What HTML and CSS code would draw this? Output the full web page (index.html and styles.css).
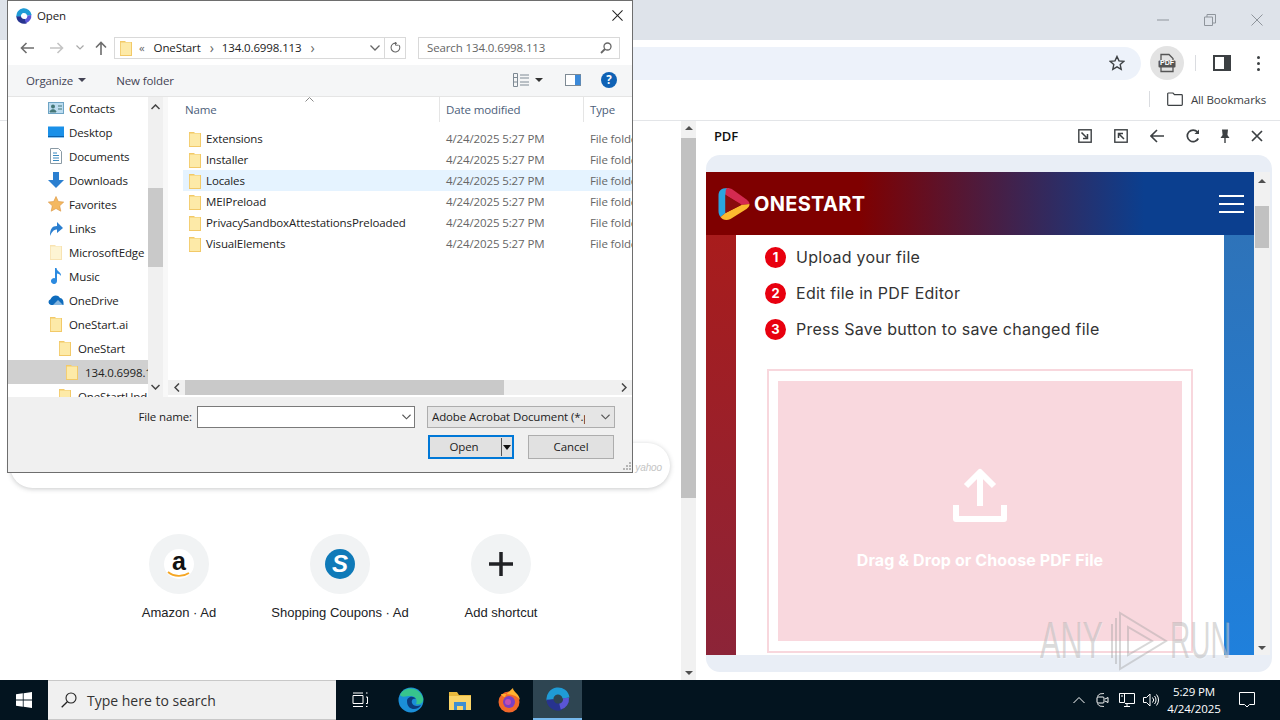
FILE: index.html
```html
<!DOCTYPE html>
<html>

<head>
  <title>OneStart - Open</title>
  <link rel="stylesheet" href="styles.css">
</head>

<body>
  <svg class="defs" width="0" height="0">
    <symbol id="folder" viewBox="0 0 16 16">
      <path d="M2 1h5l1 1h6v14H2z" fill="#f2c968" />
      <path d="M2.800 2.500h10.200v12.500H2.800z" fill="#fdeaa8" />
    </symbol>
    <symbol id="onestart" viewBox="0 0 24 24">
      <path d="M4 13A8 8 0 0 1 20 11" fill="none" stroke="#1f9bd6" stroke-width="7" />
      <path d="M4 12.500A8 8 0 0 0 15 19.500" fill="none" stroke="#27338f" stroke-width="7" />
      <path d="M14 19.700A8 8 0 0 0 20 11" fill="none" stroke="#5a55d6" stroke-width="6" />
    </symbol>
  </svg>

  <div class="browser">
    <div class="titlebar">
      <svg class="winctl" viewBox="0 0 12 12"><path d="M0 6h12" stroke="#8f959c" /></svg>
      <svg class="winctl" viewBox="0 0 12 12"><path d="M.5 3h8v8.500h-8zM3 3V.5h8.500V9H9" fill="none" stroke="#8f959c" /></svg>
      <svg class="winctl" viewBox="0 0 12 12"><path d="M.5.500l11 11M11.500.500l-11 11" stroke="#8f959c" /></svg>
    </div>

    <div class="toolbar">
      <div class="omnibox">
        <svg class="star" viewBox="0 0 16 16"><path d="M8 1.500l2 4.400 4.700.5-3.500 3.200 1 4.700L8 11.900l-4.200 2.400 1-4.700L1.300 6.400 6 5.900z" fill="none" stroke="#3c4043" stroke-width="1.400" /></svg>
      </div>
      <div class="pdf-btn">
        <svg viewBox="0 0 20 20" width="20" height="20">
          <path d="M4 1.500h8l4 4v13H4z" fill="none" stroke="#555" stroke-width="1.300" />
          <rect x="1.500" y="7.500" width="17" height="7" rx="1" fill="#555" />
        </svg>
        <span class="pdf-tag">PDF</span>
      </div>
      <div class="tool-sep"></div>
      <svg class="side-icon" viewBox="0 0 18 18"><rect x="1" y="2" width="16" height="14" fill="none" stroke="#3c4043" stroke-width="2" /><rect x="11" y="2" width="6" height="14" fill="#3c4043" /></svg>
      <div class="dots"><i></i><i></i><i></i></div>
    </div>

    <div class="bookmarks">
      <div class="bm-sep"></div>
      <svg class="bm-folder" viewBox="0 0 16 14"><path d="M.7 2V12.500a.8.8 0 0 0 .8.8h13a.8.8 0 0 0 .8-.8V3.500a.8.8 0 0 0-.8-.8H7.500L6 1H1.500a.8.8 0 0 0-.8 1z" fill="none" stroke="#3c4043" stroke-width="1.200" /></svg>
      <span class="bm-label">All Bookmarks</span>
    </div>

    <div class="content">
      <div class="ntp">
        <div class="ntp-main">
          <div class="ntp-search"><span class="yahoo">yahoo</span></div>
          <div class="shortcuts">
            <div class="shortcut">
              <div class="tile">
                <div class="amazon">a
                  <svg viewBox="0 0 24 7" class="smile"><path d="M1 1c6 5 15 5 21 1" fill="none" stroke="#f5a623" stroke-width="1.800" /></svg>
                </div>
              </div>
              <span>Amazon &middot; Ad</span>
            </div>
            <div class="shortcut">
              <div class="tile"><div class="coupon">S</div></div>
              <span>Shopping Coupons &middot; Ad</span>
            </div>
            <div class="shortcut">
              <div class="tile">
                <svg viewBox="0 0 26 26" width="26" height="26"><path d="M13 1v24M1 13h24" stroke="#202124" stroke-width="3.500" /></svg>
              </div>
              <span>Add shortcut</span>
            </div>
          </div>
        </div>
        <div class="vscroll">
          <span class="arrow up"></span>
          <div class="vthumb"></div>
          <span class="arrow down"></span>
        </div>
      </div>

      <div class="side">
        <div class="side-head">
          <span class="side-title">PDF</span>
          <div class="side-tools">
            <svg viewBox="0 0 14 14"><rect x=".8" y=".8" width="12.400" height="12.400" fill="none" stroke="#3c4043" stroke-width="1.400" /><path d="M3.500 3.500l5 5M9.500 5v4.500H5" fill="none" stroke="#3c4043" stroke-width="1.500" /></svg>
            <svg viewBox="0 0 14 14"><rect x=".8" y=".8" width="12.400" height="12.400" fill="none" stroke="#3c4043" stroke-width="1.400" /><path d="M10 10L5 5M4.500 9V4.500H9" fill="none" stroke="#3c4043" stroke-width="1.500" /></svg>
            <svg viewBox="0 0 14 14"><path d="M14 7H1.500M7 1L1 7l6 6" fill="none" stroke="#3c4043" stroke-width="1.600" /></svg>
            <svg viewBox="0 0 14 14"><path d="M12.300 9.500A5.800 5.800 0 1 1 11.500 3" fill="none" stroke="#3c4043" stroke-width="1.700" /><path d="M13 .5V5H8.500z" fill="#3c4043" /></svg>
            <svg class="tight" viewBox="0 0 14 14"><path d="M4 .5h6l-.6 5.500L11.500 9h-9l2.100-3zM6.300 9h1.400v5H6.300z" fill="#3c4043" /></svg>
            <svg class="tight" viewBox="0 0 14 14"><path d="M2 2l10 10M12 2L2 12" stroke="#3c4043" stroke-width="1.700" /></svg>
          </div>
        </div>
        <div class="side-frame">
          <div class="pdf-page">
            <div class="os-head">
              <svg class="os-logo" viewBox="0 0 32 34">
                <path d="M10 1C3 1 1 4 1 9v15c0 2 .5 4 2 6L8 26V8l2-7z" fill="#2aa5e0" />
                <path d="M10 1c2 0 3 .5 5 1.500l14 10c2 1.500 3 3 3 4.500l-8 1L8 8c0-3 0-7 2-7z" fill="#d42a50" />
                <path d="M3 30c2 3 6 4 10 2l16-10c2-1.500 3-3 3-5l-8 1-16 8z" fill="#fbb92f" />
                <path d="M8 8l16 9.500L8 26z" fill="#8a0d0d" />
              </svg>
              <span class="os-name">ONESTART</span>
              <div class="burger"><i></i><i></i><i></i></div>
            </div>
            <div class="os-body">
              <div class="strip-l"></div>
              <div class="os-main">
                <ol class="steps">
                  <li><b>1</b>Upload your file</li>
                  <li><b>2</b>Edit file in PDF Editor</li>
                  <li><b>3</b>Press Save button to save changed file</li>
                </ol>
                <div class="drop-outer">
                  <div class="drop-inner">
                    <svg viewBox="0 0 56 56" width="56" height="56"><path d="M28 39V6M14 19L28 5l14 14M4 38v14h48V38" fill="none" stroke="#fff" stroke-width="6" stroke-linejoin="round" /></svg>
                    <span class="drop-text">Drag &amp; Drop or Choose PDF File</span>
                  </div>
                </div>
              </div>
              <div class="strip-r"></div>
            </div>
          </div>
          <div class="pdf-scroll">
            <span class="arrow up dark"></span>
            <div class="pdf-thumb"></div>
            <span class="arrow down dark"></span>
          </div>
        </div>
      </div>
    </div>
  </div>

  <div class="taskbar">
    <div class="start">
      <svg viewBox="0 0 16 16" width="16" height="16"><path d="M0 2.300l6.800-1V7.600H0zM7.600 1.200L16 0v7.600H7.600zM0 8.400h6.800v6.300l-6.800-1zM7.600 8.400H16V16l-8.400-1.200z" fill="#fff" /></svg>
    </div>
    <div class="task-search">
      <svg viewBox="0 0 16 16" width="16" height="16"><circle cx="10" cy="6" r="5" fill="none" stroke="#222" stroke-width="1.100" /><path d="M6.300 9.700L.7 15.300" stroke="#222" stroke-width="1.300" /></svg>
      <span>Type here to search</span>
    </div>
    <div class="task-app">
      <svg viewBox="0 0 16 16" width="16" height="16"><path d="M1 3.500h10v8H1zM1 1h10M1 14.500h10M14 1h1.500M14 5h1.500v6.500H14M14 14.500h1.500" fill="none" stroke="#fff" /></svg>
    </div>
    <div class="task-app">
      <svg viewBox="0 0 26 26" width="26" height="26">
        <circle cx="13" cy="13" r="12.500" fill="#1b8fd8" />
        <path d="M2 8c4-9 19-9 23 3 1 5-3 7-7 6 2-4-1-8-5-8-5 0-9 2-11-1z" fill="#37c48d" />
        <path d="M9 14c0-4 6-6 9-2-2-1-5 0-4 4 1 3 5 4 9 2-3 6-14 6-14-4z" fill="#0c3b7c" />
      </svg>
    </div>
    <div class="task-app">
      <svg viewBox="0 0 24 22" width="24" height="22">
        <path d="M1 3h8l2 3h12v15H1z" fill="#e9b93c" />
        <path d="M1 7h22v14H1z" fill="#fbd568" />
        <path d="M6 13h12v8h-3v-4H9v4H6z" fill="#3f8fd0" />
      </svg>
    </div>
    <div class="task-app">
      <svg viewBox="0 0 26 26" width="26" height="26">
        <circle cx="13" cy="15" r="10.500" fill="#f2682a" />
        <path d="M5 7c1 2 2 3 4 3 1-3 4-5 8-9 0 4 6 5 7 12-4-6-14-6-19-6z" fill="#ffb02e" />
        <circle cx="13" cy="15" r="6" fill="#7a3fc4" />
        <circle cx="12" cy="15" r="3" fill="#c04fb5" />
      </svg>
    </div>
    <div class="task-app active">
      <svg width="24" height="24"><use href="#onestart" /></svg>
    </div>
    <div class="tray">
      <div class="tray-icon"><svg viewBox="0 0 12 8" width="12" height="8"><path d="M.5 7L6 1.500 11.500 7" fill="none" stroke="#fff" /></svg></div>
      <div class="tray-icon"><svg viewBox="0 0 14 16" width="14" height="16"><path d="M1 4.500a7 7 0 0 1 7-3M1 11.500a7 7 0 0 0 7 3" fill="none" stroke="#ddd" /><rect x="1" y="5" width="7" height="6" rx="1" fill="none" stroke="#fff" /><path d="M9 7l3-1.500v5L9 9" fill="none" stroke="#fff" /></svg></div>
      <div class="tray-icon"><svg viewBox="0 0 16 14" width="16" height="14"><path d="M.5 .5h15v10H6M5 13.500h6M8 10.500v3M.5 .5h5v9h-5zM2 3h2" fill="none" stroke="#fff" /></svg></div>
      <div class="tray-icon"><svg viewBox="0 0 16 14" width="16" height="14"><path d="M.5 4.500h3L7 1v12L3.500 9.500h-3zM9.500 4.500a3.500 3.500 0 0 1 0 5M11.500 3a6 6 0 0 1 0 8M13.500 1.500a8.500 8.500 0 0 1 0 11" fill="none" stroke="#fff" /></svg></div>
      <div class="clock"><span>5:29 PM</span><span>4/24/2025</span></div>
      <svg class="notif" viewBox="0 0 16 16" width="16" height="16"><path d="M.5 .5h15v12h-5L8 15l-2.500-2.500h-5z" fill="none" stroke="#fff" /></svg>
    </div>
  </div>

  <div class="watermark">
    <span class="wm-text">ANY</span>
    <svg viewBox="0 0 58 62" width="58" height="62"><path d="M2 14v34M6 8v46M10 3v56l46-28zM18 17v28l24-14z" fill="none" stroke="#a0a0a0" stroke-width="2" /></svg>
    <span class="wm-text wm-run">RUN</span>
  </div>

  <div class="dialog">
    <div class="dlg-title">
      <svg width="16" height="16"><use href="#onestart" /></svg>
      <span>Open</span>
      <svg class="dlg-close" viewBox="0 0 12 12"><path d="M.5.500l11 11M11.500.500l-11 11" stroke="#222" stroke-width="1.100" /></svg>
    </div>

    <div class="dlg-nav">
      <svg class="nav-btn" viewBox="0 0 14 12"><path d="M14 6H1.500M6.500 1l-5 5 5 5" fill="none" stroke="#6d6d6d" stroke-width="1.600" /></svg>
      <svg class="nav-btn off" viewBox="0 0 14 12"><path d="M0 6h12.500M7.500 1l5 5-5 5" fill="none" stroke="#c4c4c4" stroke-width="1.600" /></svg>
      <svg class="nav-chev" viewBox="0 0 8 5"><path d="M.5.500L4 4 7.500.500" fill="none" stroke="#a8a8a8" stroke-width="1.200" /></svg>
      <svg class="nav-up" viewBox="0 0 12 14"><path d="M6 14V1.500M1 6.500l5-5 5 5" fill="none" stroke="#6d6d6d" stroke-width="1.600" /></svg>
      <div class="crumbs">
        <svg width="16" height="16"><use href="#folder" /></svg>
        <span class="crumb-more">&laquo;</span>
        <span>OneStart</span>
        <span class="crumb-sep">&rsaquo;</span>
        <span>134.0.6998.113</span>
        <span class="crumb-sep">&rsaquo;</span>
        <svg class="crumb-drop" viewBox="0 0 10 6"><path d="M.5.500L5 5 9.500.500" fill="none" stroke="#666" stroke-width="1.300" /></svg>
        <div class="crumb-refresh">
          <svg viewBox="0 0 12 12" width="11" height="11"><path d="M10 3.500a4.800 4.800 0 1 1-2.500-2" fill="none" stroke="#666" stroke-width="1.200" /><path d="M6 0v3.500h3.500" fill="none" stroke="#666" /></svg>
        </div>
      </div>
      <div class="dlg-search">
        <span>Search 134.0.6998.113</span>
        <svg viewBox="0 0 12 12" width="12" height="12"><circle cx="7.500" cy="4.500" r="3.500" fill="none" stroke="#666" stroke-width="1.300" /><path d="M5 7L1 11" stroke="#666" stroke-width="1.800" /></svg>
      </div>
    </div>

    <div class="dlg-tools">
      <span class="org">Organize</span>
      <span class="caret"></span>
      <span class="newf">New folder</span>
      <svg class="view-icon" viewBox="0 0 16 14"><path d="M.5 .5h4v13h-4zM.5 4.500h4M.5 9h4M7 2h9M7 5h9M7 9h9M7 12h9" fill="none" stroke="#7e8a94" /></svg>
      <span class="caret dark"></span>
      <svg class="pane-icon" viewBox="0 0 16 12"><rect x=".5" y=".5" width="15" height="11" fill="#fff" stroke="#7e8a94" /><rect x="10" y="1" width="5.500" height="10" fill="#3c8ad9" /></svg>
      <div class="help">?</div>
    </div>

    <div class="dlg-main">
      <div class="tree">
        <div class="tree-list">
          <div class="node">
            <svg viewBox="0 0 16 12" width="16" height="16"><rect x=".5" y=".5" width="15" height="11" fill="#bcdcf0" stroke="#6ea4c4" /><circle cx="5" cy="4.500" r="2" fill="#477" /><path d="M2 10c0-3 6-3 6 0zM10 4h4M10 7h4" stroke="#477" fill="#477" /></svg>
            <span>Contacts</span>
          </div>
          <div class="node">
            <svg viewBox="0 0 16 12" width="16" height="16"><rect y=".5" width="16" height="11" fill="#1a90e8" /><path d="M0 10.500h16" stroke="#0d5fa8" /></svg>
            <span>Desktop</span>
          </div>
          <div class="node">
            <svg viewBox="0 0 12 16" width="16" height="16"><path d="M.5 .5h8l3 3v12H.5z" fill="#fff" stroke="#8a9aa5" /><path d="M3 5h4M3 7.500h6M3 10h6M3 12.500h6" stroke="#3a8ac0" /></svg>
            <span>Documents</span>
          </div>
          <div class="node">
            <svg viewBox="0 0 16 16" width="16" height="16"><path d="M5 0h6v8h5l-8 8-8-8h5z" fill="#2b7fd0" /></svg>
            <span>Downloads</span>
          </div>
          <div class="node">
            <svg viewBox="0 0 16 16" width="16" height="16"><path d="M8 .5l2.300 5 5.400.6-4 3.700 1.100 5.400L8 12.500 3.200 15.200l1.100-5.400-4-3.700 5.400-.6z" fill="#f4b860" stroke="#d89440" stroke-width=".6" /></svg>
            <span>Favorites</span>
          </div>
          <div class="node">
            <svg viewBox="0 0 16 16" width="16" height="16"><path d="M2 16c0-7 2-10 7-10V2l6 6-6 5V9.500c-3 0-5 2-7 6.500z" fill="#2b7fd0" /></svg>
            <span>Links</span>
          </div>
          <div class="node">
            <svg width="16" height="16" class="faded"><use href="#folder" /></svg>
            <span>MicrosoftEdge</span>
          </div>
          <div class="node">
            <svg viewBox="0 0 16 16" width="16" height="16"><path d="M7 0h1.500c.5 4 5 4 4.500 8-.8-1.500-2.500-2.500-4-2.500V13a3 3 0 1 1-2-2.800z" fill="#2b8ae0" /></svg>
            <span>Music</span>
          </div>
          <div class="node">
            <svg viewBox="0 0 16 12" width="16" height="16"><path d="M3 11a3 3 0 0 1-.5-5.800C4 1 10 0 12 4c2.500 0 4 3 3.500 7z" fill="#0f6cbd" /><path d="M5 11l5-5 5 5z" fill="#fff" opacity=".5" /></svg>
            <span>OneDrive</span>
          </div>
          <div class="node">
            <svg width="16" height="16"><use href="#folder" /></svg>
            <span>OneStart.ai</span>
          </div>
          <div class="node lvl2">
            <svg width="16" height="16"><use href="#folder" /></svg>
            <span>OneStart</span>
          </div>
          <div class="node lvl3 current">
            <svg width="16" height="16"><use href="#folder" /></svg>
            <span>134.0.6998.113</span>
          </div>
          <div class="node lvl2">
            <svg width="16" height="16"><use href="#folder" /></svg>
            <span>OneStartUpdate</span>
          </div>
        </div>
        <div class="tree-scroll">
          <svg class="sb-arrow" viewBox="0 0 9 6"><path d="M.5 5L4.500 1l4 4" fill="none" stroke="#444" stroke-width="1.500" /></svg>
          <div class="tree-thumb"></div>
          <svg class="sb-arrow" viewBox="0 0 9 6"><path d="M.5 1l4 4 4-4" fill="none" stroke="#444" stroke-width="1.500" /></svg>
        </div>
      </div>

      <div class="files">
        <div class="file-head">
          <span class="col-name">Name</span>
          <svg class="sort" viewBox="0 0 9 5"><path d="M.5 4.500L4.500.500l4 4" fill="none" stroke="#888" /></svg>
          <span class="col-date">Date modified</span>
          <span class="col-type">Type</span>
        </div>
        <div class="file-list">
          <div class="row">
            <svg width="16" height="16"><use href="#folder" /></svg>
            <span class="col-name">Extensions</span><span class="col-date">4/24/2025 5:27 PM</span><span class="col-type">File folder</span>
          </div>
          <div class="row">
            <svg width="16" height="16"><use href="#folder" /></svg>
            <span class="col-name">Installer</span><span class="col-date">4/24/2025 5:27 PM</span><span class="col-type">File folder</span>
          </div>
          <div class="row hover">
            <svg width="16" height="16"><use href="#folder" /></svg>
            <span class="col-name">Locales</span><span class="col-date">4/24/2025 5:27 PM</span><span class="col-type">File folder</span>
          </div>
          <div class="row">
            <svg width="16" height="16"><use href="#folder" /></svg>
            <span class="col-name">MEIPreload</span><span class="col-date">4/24/2025 5:27 PM</span><span class="col-type">File folder</span>
          </div>
          <div class="row">
            <svg width="16" height="16"><use href="#folder" /></svg>
            <span class="col-name">PrivacySandboxAttestationsPreloaded</span><span class="col-date">4/24/2025 5:27 PM</span><span class="col-type">File folder</span>
          </div>
          <div class="row">
            <svg width="16" height="16"><use href="#folder" /></svg>
            <span class="col-name">VisualElements</span><span class="col-date">4/24/2025 5:27 PM</span><span class="col-type">File folder</span>
          </div>
        </div>
        <div class="hscroll">
          <svg class="sb-arrow" viewBox="0 0 6 9"><path d="M5 .5l-4 4 4 4" fill="none" stroke="#444" stroke-width="1.500" /></svg>
          <div class="htrack"><div class="hthumb"></div></div>
          <svg class="sb-arrow" viewBox="0 0 6 9"><path d="M1 .5l4 4-4 4" fill="none" stroke="#444" stroke-width="1.500" /></svg>
        </div>
      </div>
    </div>

    <div class="dlg-foot">
      <div class="foot-row">
        <label class="fname">File name:</label>
        <div class="fname-input">
          <svg viewBox="0 0 10 6" width="9" height="6"><path d="M.5.500L5 5 9.500.500" fill="none" stroke="#555" stroke-width="1.200" /></svg>
        </div>
        <div class="filter">
          <span>Adobe Acrobat Document (*.pdf)</span>
          <svg viewBox="0 0 10 6" width="9" height="6"><path d="M.5.500L5 5 9.500.500" fill="none" stroke="#555" stroke-width="1.200" /></svg>
        </div>
      </div>
      <div class="foot-row btns">
        <div class="btn primary"><span>Open</span><i class="split"></i></div>
        <div class="btn">Cancel</div>
      </div>
      <svg class="grip" viewBox="0 0 10 10" width="10" height="10"><path d="M8 1h2v2H8zM5 4h2v2H5zM8 4h2v2H8zM2 7h2v2H2zM5 7h2v2H5zM8 7h2v2H8z" fill="#b5b5b5" /></svg>
    </div>
  </div>
</body>

</html>
```

FILE: styles.css
```css
* {
  box-sizing: border-box;
}

body {
  margin: 0;
  width: 1280px;
  height: 720px;
  overflow: hidden;
  display: flex;
  flex-direction: column;
  font-family: "Open Sans", "Liberation Sans", sans-serif;
  font-size: 11.5px;
  letter-spacing: -.12px;
  color: #222;
  background: #fff;
}

svg {
  flex-shrink: 0;
}

.defs {
  position: absolute;
}

.browser {
  flex: 1;
  display: flex;
  flex-direction: column;
  min-height: 0;
}

/* window chrome */
.titlebar {
  height: 40px;
  background: #dee3ea;
  display: flex;
  justify-content: flex-end;
  align-items: center;
  gap: 35px;
  padding-right: 17px;
}

.winctl {
  width: 12px;
  height: 12px;
}

.toolbar {
  height: 44px;
  background: #fff;
  border-top-right-radius: 10px;
  display: flex;
  align-items: center;
  padding: 2px 19px 0 100px;
}

.omnibox {
  flex: 1;
  height: 33px;
  background: #edf2fa;
  border-radius: 0 17px 17px 0;
  display: flex;
  justify-content: flex-end;
  align-items: center;
  padding-right: 16px;
}

.star {
  width: 16px;
  height: 16px;
}

.pdf-btn {
  position: relative;
  width: 34px;
  height: 34px;
  margin-left: 9px;
  border-radius: 50%;
  background: #e3e3e3;
  display: flex;
  align-items: center;
  justify-content: center;
}

.pdf-tag {
  position: absolute;
  left: 10px;
  top: 13px;
  font: bold 7px "Liberation Sans", sans-serif;
  letter-spacing: 0;
  color: #fff;
}

.tool-sep {
  width: 1px;
  height: 16px;
  background: #dadce0;
  margin: 0 17px 0 11px;
}

.side-icon {
  width: 18px;
  height: 18px;
}

.dots {
  width: 4px;
  margin-left: 26px;
  display: flex;
  flex-direction: column;
  gap: 3px;
}

.dots i {
  width: 3px;
  height: 3px;
  border-radius: 50%;
  background: #3c4043;
}

.bookmarks {
  height: 37px;
  border-bottom: 1px solid #e3e5e8;
  display: flex;
  justify-content: flex-end;
  align-items: center;
  padding: 0 14px 6px 0;
}

.bm-sep {
  width: 1px;
  height: 16px;
  background: #dadce0;
  margin-right: 17px;
}

.bm-folder {
  width: 16px;
  height: 14px;
  margin-right: 8px;
}

.bm-label {
  color: #3c4043;
}

.content {
  flex: 1;
  display: flex;
  min-height: 0;
}

/* new tab page */
.ntp {
  width: 696px;
  display: flex;
}

.ntp-main {
  flex: 1;
  padding: 322px 11px 0 10px;
}

.ntp-search {
  height: 45px;
  background: #fff;
  border-radius: 24px;
  box-shadow: 0 1px 5px rgba(60, 64, 67, 0.28);
  display: flex;
  justify-content: flex-end;
  align-items: flex-end;
  padding: 0 8px 15px 0;
}

.yahoo {
  font: italic 10px "Liberation Sans", sans-serif;
  color: #c4c4c4;
}

.shortcuts {
  display: flex;
  margin: 46px 0 0 109px;
  gap: 41px;
}

.shortcut {
  width: 120px;
  display: flex;
  flex-direction: column;
  align-items: center;
  gap: 10px;
  font: 13px/17px "Liberation Sans", sans-serif;
  letter-spacing: 0;
  color: #202124;
  white-space: nowrap;
}

.tile {
  width: 60px;
  height: 60px;
  border-radius: 50%;
  background: #f1f3f4;
  display: flex;
  align-items: center;
  justify-content: center;
}

.amazon {
  width: 30px;
  height: 30px;
  border-radius: 50%;
  background: #fff;
  position: relative;
  text-align: center;
  font: bold 25px/25px "Liberation Sans", sans-serif;
  color: #111;
}

.smile {
  position: absolute;
  left: 3px;
  top: 22px;
  width: 24px;
  height: 7px;
}

.coupon {
  width: 30px;
  height: 30px;
  border-radius: 50%;
  background: #0f7ab8;
  color: #fff;
  text-align: center;
  font: italic bold 24px/30px "Liberation Sans", sans-serif;
}

.vscroll {
  width: 15px;
  background: #f1f1f1;
  display: flex;
  flex-direction: column;
  align-items: center;
  padding-top: 5px;
}

.vthumb {
  width: 100%;
  height: 360px;
  margin-top: 8px;
  background: #c1c1c1;
}

.arrow {
  width: 0;
  height: 0;
  border-left: 4px solid transparent;
  border-right: 4px solid transparent;
}

.arrow.up {
  border-bottom: 4px solid #505050;
}

.arrow.down {
  margin-top: auto;
  margin-bottom: 5px;
  border-top: 4px solid #505050;
}

/* side panel */
.side {
  flex: 1;
  padding: 0 8px 8px 10px;
  display: flex;
  flex-direction: column;
}

.side-head {
  height: 34px;
  display: flex;
  align-items: center;
  padding: 0 0 4px 8px;
}

.side-title {
  font-size: 13px;
  font-weight: 600;
  color: #111;
}

.side-tools {
  margin-left: auto;
  display: flex;
  align-items: center;
  gap: 22px;
  margin-right: 8px;
}

.side-tools svg {
  width: 14px;
  height: 14px;
}

.side-tools .tight {
  margin-left: -4px;
}

.side-frame {
  flex: 1;
  min-height: 0;
  display: flex;
  background: #e9eef6;
  border-radius: 14px;
  padding: 17px 2px 17px 0;
}

.pdf-page {
  flex: 1;
  display: flex;
  flex-direction: column;
  background: #fff;
}

.os-head {
  height: 63px;
  background: linear-gradient(90deg, #7f0000 0, #7f0000 28%, #0b3f8f 80%, #0b3f8f 100%);
  display: flex;
  align-items: center;
  padding: 0 10px 0 11px;
}

.os-logo {
  width: 33px;
  height: 34px;
}

.os-name {
  font: bold 20px "Inter", sans-serif;
  color: #fff;
  margin-left: 4px;
  letter-spacing: .3px;
}

.burger {
  margin-left: auto;
  width: 25px;
  display: flex;
  flex-direction: column;
  gap: 6px;
}

.burger i {
  height: 2px;
  background: #fff;
}

.os-body {
  flex: 1;
  min-height: 0;
  display: flex;
}

.strip-l {
  width: 30px;
  background: linear-gradient(#a81c1c, #8c2438);
}

.strip-r {
  width: 30px;
  background: linear-gradient(#2e73b9, #1f80dc);
}

.os-main {
  flex: 1;
  padding: 0 31px;
  overflow: hidden;
}

.steps {
  list-style: none;
  margin: 0 0 0 -2px;
  padding: 4px 0 0 0;
  font: 16px/36px "Inter", sans-serif;
  letter-spacing: .27px;
  color: #333;
}

.steps li {
  display: flex;
  align-items: center;
  gap: 10px;
}

.steps b {
  width: 21px;
  height: 21px;
  border-radius: 50%;
  background: #e8000f;
  color: #fff;
  font-size: 13px;
  line-height: 21px;
  text-align: center;
  letter-spacing: 0;
}

.drop-outer {
  margin-top: 22px;
  height: 284px;
  border: 2px solid #f8d7dd;
  padding: 10px 9px;
}

.drop-inner {
  height: 100%;
  background: #f9d8de;
  display: flex;
  flex-direction: column;
  align-items: center;
  padding-top: 86px;
}

.drop-text {
  font: bold 16px "Inter", sans-serif;
  letter-spacing: .1px;
  color: #fff;
  margin-top: 27px;
}

.pdf-scroll {
  width: 16px;
  background: #f1f1f1;
  display: flex;
  flex-direction: column;
  align-items: center;
  padding-top: 7px;
}

.pdf-thumb {
  width: 14px;
  height: 42px;
  margin-top: 23px;
  background: #c1c1c1;
}

/* taskbar */
.taskbar {
  height: 40px;
  background: #03141f;
  display: flex;
  align-items: center;
  flex-shrink: 0;
}

.start {
  width: 48px;
  height: 40px;
  display: flex;
  align-items: center;
  justify-content: center;
}

.task-search {
  width: 288px;
  height: 40px;
  background: #f0f0f0;
  border: 1px solid #c8c8c8;
  border-width: 1px 0;
  display: flex;
  align-items: center;
  gap: 10px;
  padding-left: 13px;
  font-size: 14px;
  letter-spacing: 0;
  color: #333;
}

.task-app {
  width: 49px;
  height: 40px;
  display: flex;
  align-items: center;
  justify-content: center;
}

.task-app:nth-child(3) {
  width: 48px;
}

.task-app:nth-child(4) {
  margin-left: 2px;
}

.task-app.active {
  background: #2e4552;
  border-bottom: 2px solid #76b9ed;
}

.tray {
  margin-left: auto;
  display: flex;
  align-items: center;
  color: #fff;
  padding-right: 25px;
}

.tray-icon {
  width: 24px;
  display: flex;
  justify-content: center;
}

.clock {
  width: 68px;
  margin-left: -3px;
  display: flex;
  flex-direction: column;
  align-items: center;
  line-height: 17px;
}

.notif {
  margin-left: 11px;
}

/* overlay watermark */
.watermark {
  position: absolute;
  left: 1040px;
  top: 610px;
  display: flex;
  align-items: center;
  font: 51px/62px "Liberation Sans", sans-serif;
  letter-spacing: 0;
  color: rgba(160, 160, 160, .38);
  text-shadow: 1px 1px 0 rgba(255, 255, 255, .35);
}

.watermark svg {
  opacity: .4;
  margin-right: 2px;
}

.wm-text {
  width: 70px;
  white-space: nowrap;
  display: inline-block;
  transform: scaleX(.6);
  transform-origin: left center;
}

.wm-run {
  width: 60px;
  transform: scaleX(.55);
}

/* file dialog */
.dialog {
  position: absolute;
  left: 7px;
  top: 0;
  width: 626px;
  height: 473px;
  background: #fff;
  border: 1px solid #6e6e6e;
  display: flex;
  flex-direction: column;
}

.dlg-title {
  height: 29px;
  display: flex;
  align-items: center;
  gap: 5px;
  padding-left: 8px;
  flex-shrink: 0;
}

.dlg-close {
  width: 11px;
  height: 11px;
  margin-left: auto;
  margin-right: 9px;
}

.dlg-nav {
  height: 35px;
  display: flex;
  align-items: center;
  flex-shrink: 0;
  padding-left: 12px;
}

.nav-btn {
  width: 14px;
  height: 12px;
  margin-right: 16px;
}

.nav-chev {
  width: 8px;
  height: 5px;
  margin-left: -4px;
}

.nav-up {
  width: 12px;
  height: 14px;
  margin-left: 11px;
}

.crumbs {
  width: 292px;
  height: 22px;
  margin-left: 7px;
  border: 1px solid #d9d9d9;
  display: flex;
  align-items: center;
  padding-left: 3px;
  color: #222;
}

.crumb-more {
  margin: 0 9px 0 5px;
  color: #666;
}

.crumb-sep {
  margin: 0 8px 0 9px;
  color: #666;
  font-size: 14px;
}

.crumb-drop {
  width: 10px;
  height: 6px;
  margin-left: auto;
}

.crumb-refresh {
  width: 21px;
  height: 20px;
  margin-left: 4px;
  border-left: 1px solid #d9d9d9;
  display: flex;
  align-items: center;
  justify-content: center;
}

.dlg-search {
  width: 202px;
  height: 22px;
  margin-left: 12px;
  border: 1px solid #d9d9d9;
  display: flex;
  align-items: center;
  justify-content: space-between;
  padding: 0 7px 0 8px;
  color: #666;
}

.dlg-tools {
  height: 32px;
  background: #f5f6f7;
  border-bottom: 1px solid #e5e5e5;
  display: flex;
  align-items: center;
  flex-shrink: 0;
  padding: 0 0 1px 18px;
  color: #445;
}

.caret {
  width: 0;
  height: 0;
  margin-left: 5px;
  border-left: 4px solid transparent;
  border-right: 4px solid transparent;
  border-top: 4px solid #445;
}

.caret.dark {
  margin-left: 6px;
  border-top-color: #333;
}

.newf {
  margin-left: 30px;
}

.view-icon {
  width: 16px;
  height: 14px;
  margin-left: auto;
}

.pane-icon {
  width: 16px;
  height: 12px;
  margin-left: 22px;
}

.help {
  width: 16px;
  height: 16px;
  margin: 0 15px 0 20px;
  border-radius: 50%;
  background: #0f62b5;
  color: #fff;
  text-align: center;
  font-weight: 700;
  line-height: 16px;
}

.dlg-main {
  flex: 1;
  min-height: 0;
  display: flex;
}

.tree {
  width: 155px;
  display: flex;
  flex-shrink: 0;
  overflow: hidden;
}

.tree-list {
  width: 140px;
  margin-top: -1px;
  overflow: hidden;
}

.node {
  height: 24px;
  display: flex;
  align-items: center;
  gap: 5px;
  padding-left: 40px;
  white-space: nowrap;
}

.node.lvl2 {
  padding-left: 49px;
}

.node.lvl3 {
  padding-left: 56px;
}

.node.current {
  background: #d0d0d0;
}

.faded {
  opacity: .5;
}

.tree-scroll {
  width: 15px;
  background: #f0f0f0;
  display: flex;
  flex-direction: column;
  align-items: center;
  padding: 7px 0;
}

.sb-arrow {
  width: 9px;
  height: 6px;
}

.tree-thumb {
  width: 100%;
  height: 79px;
  margin: 78px 0 auto;
  background: #c9c9c9;
}

.files {
  flex: 1;
  min-width: 0;
  display: flex;
  flex-direction: column;
  border-left: 5px solid #f8f8f8;
}

.col-name {
  flex-shrink: 0;
  white-space: nowrap;
}

.col-date {
  flex-shrink: 0;
  color: #666;
}

.col-type {
  color: #666;
  white-space: nowrap;
}

.file-head {
  height: 25px;
  display: flex;
  align-items: center;
  position: relative;
  padding-left: 17px;
  color: #4c607a;
}

.file-head .col-name {
  width: 254px;
}

.file-head .col-date {
  width: 144px;
  color: #4c607a;
  border-left: 1px solid #e5e5e5;
  padding-left: 6px;
  line-height: 25px;
}

.file-head .col-type {
  color: #4c607a;
  border-left: 1px solid #e5e5e5;
  padding-left: 6px;
  line-height: 25px;
}

.sort {
  position: absolute;
  left: 137px;
  top: 0;
  width: 9px;
  height: 5px;
}

.file-list {
  flex: 1;
  padding-top: 6px;
  overflow: hidden;
}

.row {
  height: 21px;
  margin-left: 15px;
  display: flex;
  align-items: center;
  gap: 3px;
  padding-left: 4px;
  white-space: nowrap;
  overflow: hidden;
}

.row .col-name {
  width: 237px;
}

.row .col-date {
  width: 141px;
}

.row.hover {
  background: #e5f3ff;
}

.hscroll {
  height: 15px;
  margin-bottom: 2px;
  display: flex;
  align-items: center;
  background: #f0f0f0;
}

.hscroll .sb-arrow {
  width: 6px;
  height: 9px;
  margin: 0 5px 0 6px;
}

.htrack {
  flex: 1;
  height: 100%;
}

.hthumb {
  width: 319px;
  height: 100%;
  background: #c9c9c9;
}

.dlg-foot {
  height: 75px;
  background: #f0f0f0;
  flex-shrink: 0;
  position: relative;
  padding-top: 9px;
}

.foot-row {
  display: flex;
  align-items: center;
}

.fname {
  width: 184px;
  text-align: right;
  padding-bottom: 1px;
}

.fname-input {
  width: 218px;
  height: 22px;
  margin-left: 5px;
  background: #fff;
  border: 1px solid #7a7a7a;
  display: flex;
  justify-content: flex-end;
  align-items: center;
  padding-right: 3px;
}

.filter {
  width: 188px;
  height: 22px;
  margin-left: 12px;
  background: #e5e5e5;
  border: 1px solid #adadad;
  display: flex;
  align-items: center;
  padding: 0 4px 1px;
  overflow: hidden;
  justify-content: space-between;
}

.filter span {
  width: 153px;
  overflow: hidden;
  white-space: nowrap;
}

.btns {
  margin-top: 7px;
  padding-left: 420px;
  gap: 14px;
}

.btn {
  width: 86px;
  height: 24px;
  background: #e1e1e1;
  border: 1px solid #adadad;
  text-align: center;
  line-height: 22px;
}

.btn.primary {
  position: relative;
  border: 2px solid #0078d7;
  line-height: 20px;
  padding-right: 14px;
}

.split {
  position: absolute;
  right: 10px;
  top: 1px;
  bottom: 1px;
  width: 1px;
  background: #555;
}

.split::after {
  content: "";
  position: absolute;
  left: 2px;
  top: 7px;
  border-left: 4px solid transparent;
  border-right: 4px solid transparent;
  border-top: 5px solid #111;
}

.grip {
  position: absolute;
  right: 1px;
  bottom: 1px;
}
```
